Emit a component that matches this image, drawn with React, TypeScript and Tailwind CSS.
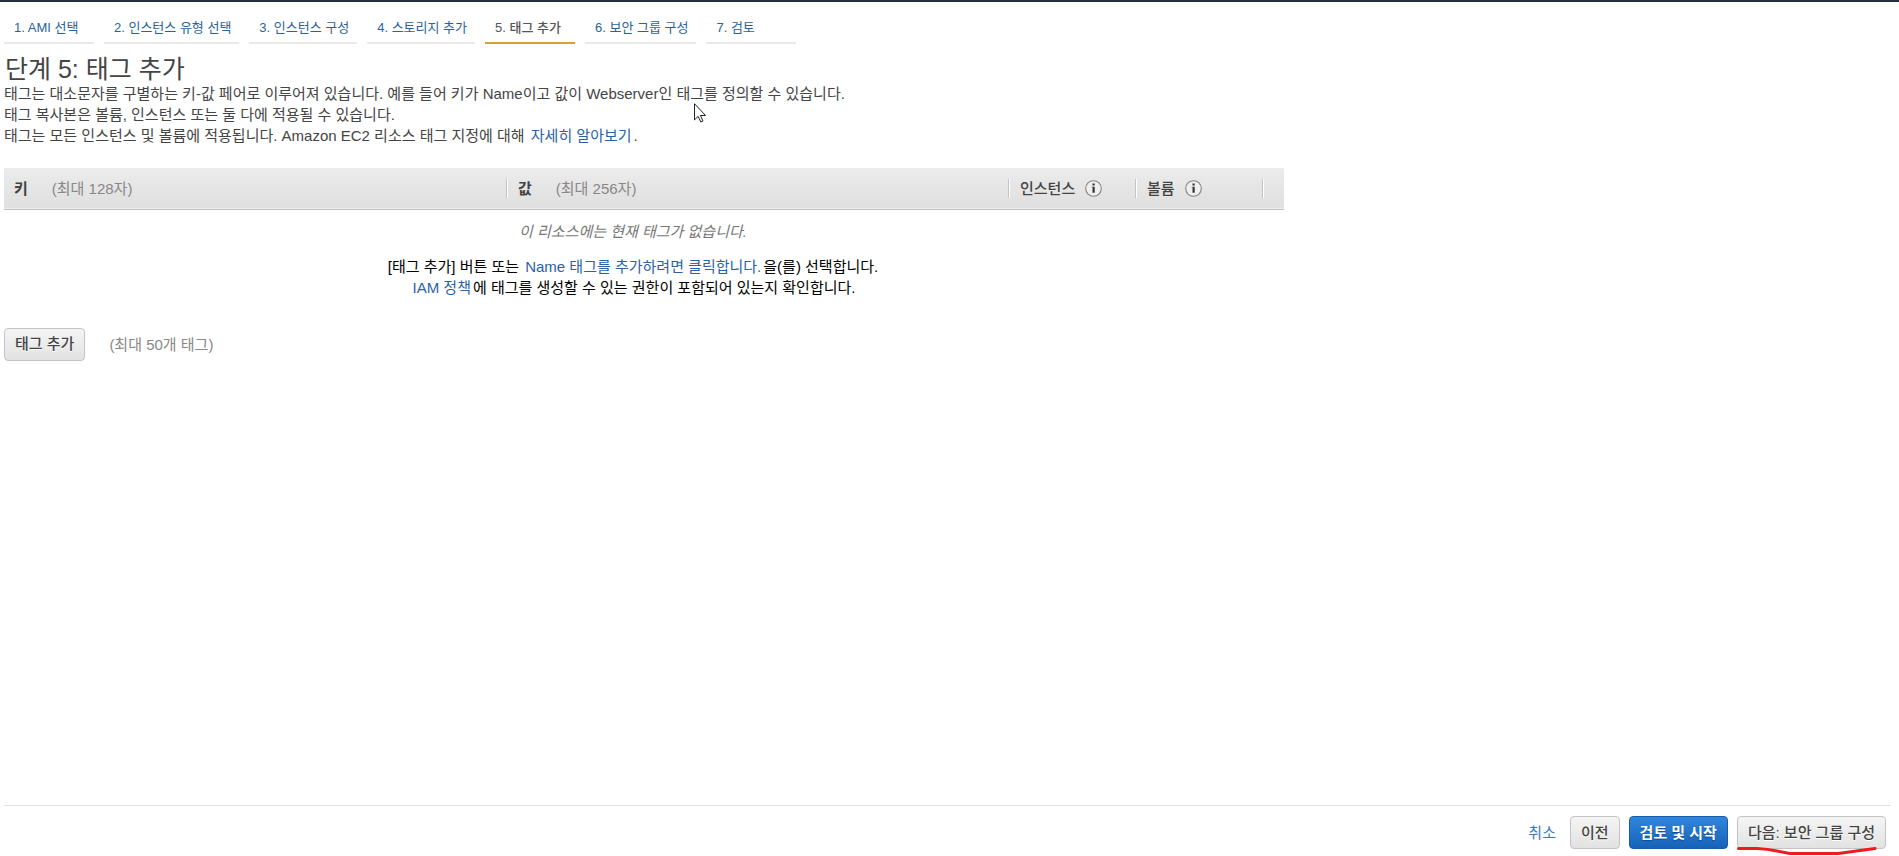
import type { ReactNode } from 'react';

const steps = [
  '1. AMI 선택',
  '2. 인스턴스 유형 선택',
  '3. 인스턴스 구성',
  '4. 스토리지 추가',
  '5. 태그 추가',
  '6. 보안 그룹 구성',
  '7. 검토',
];
const current = 4;

const linkClass = 'px-0.5 text-[#2a62a8] hover:underline';
const greyButton =
  'h-[33px] rounded border border-[#c4c4c4] bg-linear-to-b from-[#f5f5f5] to-[#e2e2e2] px-2.5 pb-px font-medium text-[#444] [text-shadow:0_1px_0_#fff]';

function InfoIcon() {
  return (
    <svg width="17" height="17" viewBox="0 0 17 17" aria-hidden="true">
      <circle cx="8.5" cy="8.5" r="7.8" fill="#efefef" stroke="#858585" strokeWidth="1.1" />
      <path d="M7.500 3.600h2.200v1.800H7.500zM7.500 6.700h2.200v6H7.500z" fill="#333" />
      <path d="M6.700 6.700h1v1h-1z" fill="#777" />
    </svg>
  );
}

function HeaderCell({ children, first = false }: { children?: ReactNode; first?: boolean }) {
  return (
    <th className="h-[41px] p-0 text-left align-middle font-medium">
      <div
        className={
          first
            ? 'flex h-[19px] items-center pl-2.5'
            : 'flex h-[19px] items-center border-l border-[#c4c4c4] pl-[11px] shadow-[inset_1px_0_0_#fff]'
        }
      >
        {children}
      </div>
    </th>
  );
}

function Header() {
  return (
    <nav className="px-1 pt-3.5" aria-label="단계">
      <ol className="flex gap-2.5 text-[13px] leading-6">
        {steps.map((step, i) => (
          <li key={step}>
            <a
              href="#"
              aria-current={i === current ? 'step' : undefined}
              className={
                i === current
                  ? 'block min-w-[90px] border-b-2 border-[#d99f3d] pr-2 pb-0.5 pl-2.5 font-medium text-[#555]'
                  : 'block min-w-[90px] border-b-2 border-[#eaeaea] pr-2 pb-0.5 pl-2.5 text-[#2a629c]'
              }
            >
              {step}
            </a>
          </li>
        ))}
      </ol>
    </nav>
  );
}

function TagTable() {
  return (
    <table className="w-full max-w-[1280px] table-fixed border-collapse">
      <colgroup>
        <col />
        <col />
        <col className="w-[127px]" />
        <col className="w-[127px]" />
        <col className="w-[22px]" />
      </colgroup>
      <thead className="border-b border-[#c0c0c0] bg-linear-to-b from-[#ececec] to-[#dfdfdf] text-[#444]">
        <tr>
          <HeaderCell first>
            <span className="font-bold">키</span>
            <span className="ml-6 font-normal text-[#888]">(최대 128자)</span>
          </HeaderCell>
          <HeaderCell>
            <span className="font-bold">값</span>
            <span className="ml-6 font-normal text-[#888]">(최대 256자)</span>
          </HeaderCell>
          <HeaderCell>
            <span className="mr-2.5">인스턴스</span>
            <InfoIcon />
          </HeaderCell>
          <HeaderCell>
            <span className="mr-2.5">볼륨</span>
            <InfoIcon />
          </HeaderCell>
          <HeaderCell />
        </tr>
      </thead>
      <tbody>
        <tr>
          <td colSpan={4} className="pt-[11px] text-center text-black">
            <p className="mb-3.5 text-[#777] italic">이 리소스에는 현재 태그가 없습니다.</p>
            <p>
              [태그 추가] 버튼 또는{' '}
              <a href="#" className={linkClass}>Name 태그를 추가하려면 클릭합니다.</a>
              을(를) 선택합니다.
            </p>
            <p>
              <a href="#" className={linkClass}>IAM 정책</a>
              에 태그를 생성할 수 있는 권한이 포함되어 있는지 확인합니다.
            </p>
          </td>
          <td />
        </tr>
      </tbody>
    </table>
  );
}

export default function App() {
  return (
    <div className="relative flex min-h-screen flex-col border-t-2 border-[#252f3e] bg-white font-['Liberation_Sans','Noto_Sans_CJK_KR',sans-serif] text-[15px] leading-[21px] text-[#444]">
      <Header />
      <main className="flex-1 px-1 pt-3">
        <h1 className="pl-px text-[25px] leading-[27px]">단계 5: 태그 추가</h1>
        <div className="mb-[22px]">
          <p>태그는 대소문자를 구별하는 키-값 페어로 이루어져 있습니다. 예를 들어 키가 Name이고 값이 Webserver인 태그를 정의할 수 있습니다.</p>
          <p>태그 복사본은 볼륨, 인스턴스 또는 둘 다에 적용될 수 있습니다.</p>
          <p>
            태그는 모든 인스턴스 및 볼륨에 적용됩니다. Amazon EC2 리소스 태그 지정에 대해{' '}
            <a href="#" className={linkClass}>자세히 알아보기</a>.
          </p>
        </div>
        <TagTable />
        <div className="mt-[30px] flex items-center gap-6">
          <button type="button" className={greyButton}>태그 추가</button>
          <span className="text-[#888]">(최대 50개 태그)</span>
        </div>
      </main>
      <footer className="mr-2 ml-1 flex items-center justify-end border-t border-[#e2e2e2] pt-2.5 pr-[5px] pb-[7px]">
        <a href="#" className="mr-3.5 text-[#3c76c2]">취소</a>
        <button type="button" className={greyButton + ' mr-[9px]'}>이전</button>
        <button
          type="button"
          className="mr-[9px] h-[33px] rounded border border-[#1a5ba8] bg-linear-to-b from-[#2f86dc] to-[#1762b8] px-2.5 pb-px font-bold text-white [text-shadow:0_1px_1px_#134a86]"
        >
          검토 및 시작
        </button>
        <div className="relative">
          <button type="button" className={greyButton}>다음: 보안 그룹 구성</button>
          <svg
            className="pointer-events-none absolute top-[29px] left-0"
            width="142"
            height="11"
            viewBox="0 0 142 11"
            fill="none"
            aria-hidden="true"
          >
            <path d="M1.500 3.500H20Q31 4 40 6L53 8.500H101L138 3.500" stroke="#ed1c24" strokeWidth="3" strokeLinecap="round" strokeLinejoin="round" />
          </svg>
        </div>
      </footer>
      <svg
        className="pointer-events-none absolute top-[101px] left-[694px]"
        width="13"
        height="20"
        viewBox="0 0 13 20"
        aria-hidden="true"
      >
        <path d="M.5.700v16.200l3.600-3.500 2.700 5.600 2.200-1-2.600-5.500h5.100z" fill="#fff" stroke="#222" strokeWidth="1" strokeLinejoin="round" />
      </svg>
    </div>
  );
}
